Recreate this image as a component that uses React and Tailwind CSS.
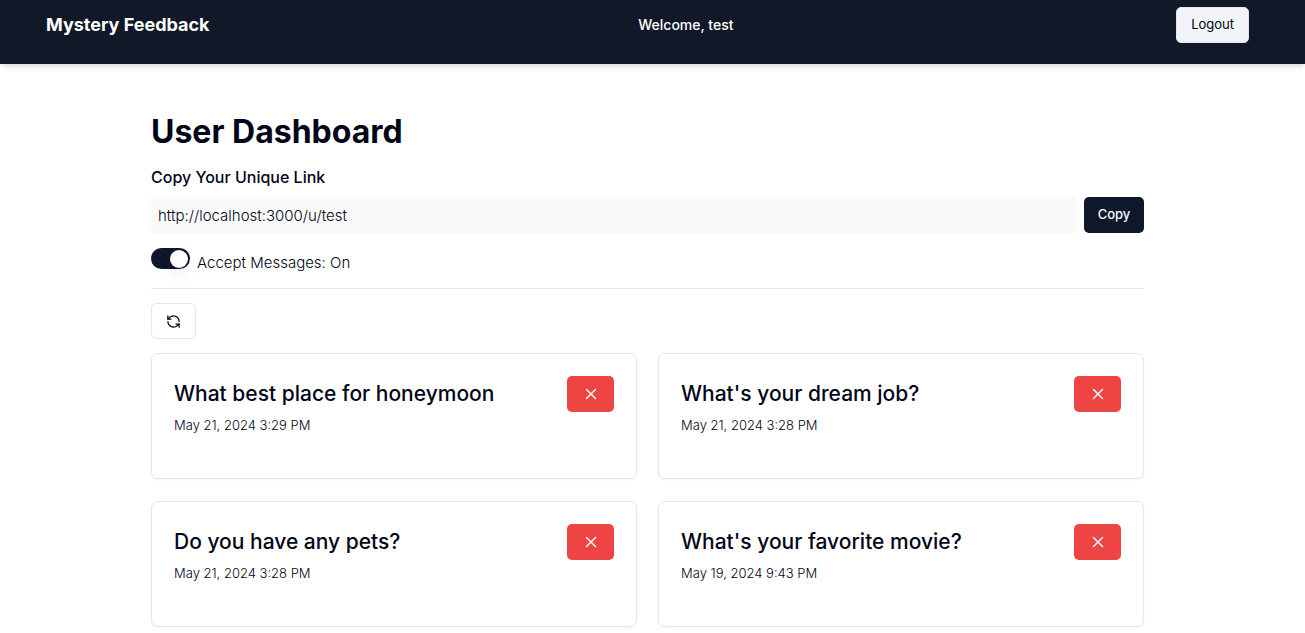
import { useState } from "react";
import { RefreshCcw, X } from "lucide-react";

const initialMessages = [
  { id: 1, content: "What best place for honeymoon", date: "May 21, 2024 3:29 PM" },
  { id: 2, content: "What's your dream job?", date: "May 21, 2024 3:28 PM" },
  { id: 3, content: "Do you have any pets?", date: "May 21, 2024 3:28 PM" },
  { id: 4, content: "What's your favorite movie?", date: "May 19, 2024 9:43 PM" },
];

function Navbar() {
  return (
    <nav className="bg-[#111827] pt-[7px] pr-[56px] pb-[21px] pl-[46px] text-white shadow-md">
      <div className="flex items-center justify-between">
        <a href="#" className="text-[18px] leading-7 font-bold">
          Mystery Feedback
        </a>
        <span className="mr-[14px] text-[14px] leading-6 font-medium">Welcome, test</span>
        <button
          type="button"
          className="h-9 rounded-[5px] border border-slate-200 bg-slate-100 px-[14px] text-[13px] text-black"
        >
          Logout
        </button>
      </div>
    </nav>
  );
}

function MessageCard({ message, onDelete }) {
  return (
    <article className="min-h-[126px] rounded-[7px] border border-slate-200 bg-white px-[22px] py-[22px] shadow-xs">
      <div className="flex items-start justify-between">
        <div>
          <h2 className="pt-1 text-[21px] leading-7 font-medium">{message.content}</h2>
          <p className="mt-2 text-[13px] leading-[18px] font-light">{message.date}</p>
        </div>
        <button
          type="button"
          aria-label="Delete message"
          onClick={() => onDelete(message.id)}
          className="flex h-9 w-[47px] shrink-0 items-center justify-center rounded-[5px] bg-[#ef4444] text-slate-50"
        >
          <X size={18} strokeWidth={2} />
        </button>
      </div>
    </article>
  );
}

export default function App() {
  const [messages, setMessages] = useState(initialMessages);
  const [accepting, setAccepting] = useState(true);

  const removeMessage = (id) => setMessages(messages.filter((m) => m.id !== id));

  return (
    <div className="min-h-screen bg-white font-['Inter',sans-serif] text-slate-950">
      <Navbar />
      <div className="pr-[10px]">
        <main className="mx-auto max-w-[1037px] px-[22px] pt-[50px]">
          <h1 className="text-[32px] leading-9 font-bold">User Dashboard</h1>

          <section className="mt-[15px]">
            <label htmlFor="link" className="block text-[16px] leading-6 font-medium">
              Copy Your Unique Link
            </label>
            <div className="mt-2 flex items-center gap-[7px]">
              <input
                id="link"
                type="text"
                readOnly
                value="http://localhost:3000/u/test"
                className="h-9 min-w-0 flex-1 bg-neutral-50 px-[7px] text-[15px] font-light outline-none"
              />
              <button
                type="button"
                className="h-9 w-[60px] rounded-[5px] bg-slate-900 text-[13px] font-medium text-slate-50"
              >
                Copy
              </button>
            </div>
          </section>

          <div className="mt-[15px] flex items-start gap-[7px]">
            <input
              id="accept"
              type="checkbox"
              role="switch"
              checked={accepting}
              onChange={(e) => setAccepting(e.target.checked)}
              className="flex h-[21px] w-[39px] shrink-0 appearance-none items-center rounded-full bg-slate-200 px-[2px] before:size-[18px] before:rounded-full before:bg-white before:shadow-lg before:content-[''] checked:justify-end checked:bg-slate-900"
            />
            <label htmlFor="accept" className="pt-1 text-[15px] leading-[22px] font-light">
              Accept Messages: {accepting ? "On" : "Off"}
            </label>
          </div>

          <hr className="mt-[14px] border-slate-200" />

          <button
            type="button"
            aria-label="Refresh messages"
            className="mt-[14px] flex h-9 items-center justify-center rounded-[5px] border border-slate-200 bg-white px-[14px]"
          >
            <RefreshCcw size={15} strokeWidth={2} />
          </button>

          <div className="mt-[14px] grid grid-cols-1 gap-x-[21px] gap-y-[22px] md:grid-cols-2">
            {messages.map((message) => (
              <MessageCard key={message.id} message={message} onDelete={removeMessage} />
            ))}
          </div>
        </main>
      </div>
    </div>
  );
}
